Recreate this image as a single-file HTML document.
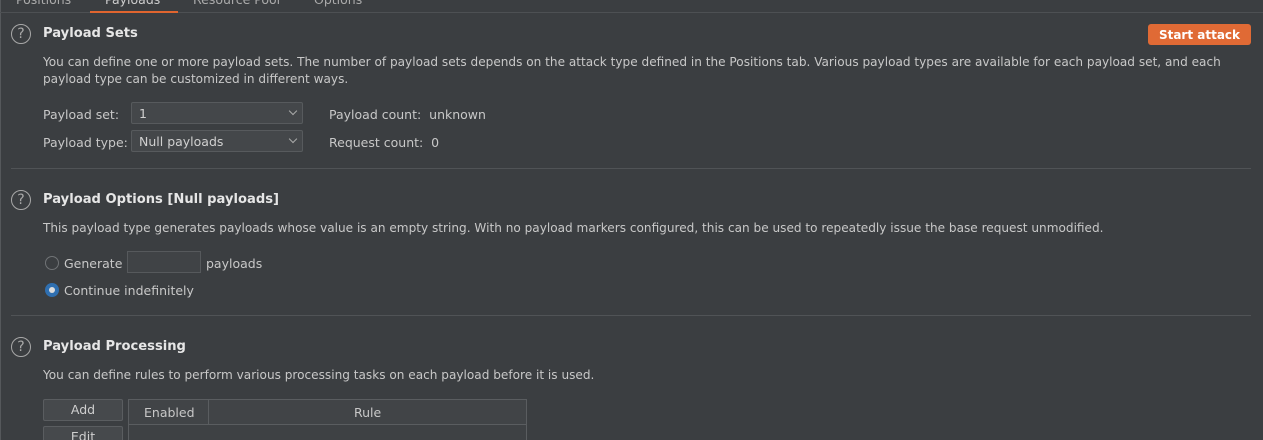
<!DOCTYPE html>
<html><head><style>
html,body{margin:0;width:1263px;height:440px;overflow:hidden}
body{background:#3b3e41;font-family:"DejaVu Sans","Liberation Sans",sans-serif;color:#c8c8c8;font-size:12.5px;position:relative}
.a{position:absolute;white-space:nowrap}
.h{font-weight:bold;font-size:13.1px;color:#e6e6e6}
.q{position:absolute;width:20px;height:20px;border:1.3px solid #a8a8a8;border-radius:50%;box-sizing:border-box;color:#a8a8a8;font-size:14px;text-align:center;line-height:18px}
.sep{position:absolute;left:11px;width:1240px;height:1px;background:#505356}
.dd{position:absolute;left:131px;width:172px;height:22px;border:1px solid #575a5d;background:#44474a;box-sizing:border-box;border-radius:2px;padding-left:7px;line-height:21px;color:#d0d0d0}
.dd:after{content:"";position:absolute;right:6px;top:5px;width:5px;height:5px;border-right:1.2px solid #aaa;border-bottom:1.2px solid #aaa;transform:rotate(45deg)}
.btn{position:absolute;left:43px;width:80px;height:22px;background:#46494c;border:1px solid #5a5d60;box-sizing:border-box;border-radius:2px;text-align:center;line-height:20px;color:#cfcfcf}
.d{font-size:12.1px}
</style></head><body>
<div class="a" style="left:0;top:0;width:1px;height:440px;background:#55585b"></div>
<div class="a" style="left:0;top:12px;width:1263px;height:1px;background:#4d5053"></div>
<div class="a" style="left:16px;top:-8px;color:#aaa">Positions</div>
<div class="a" style="left:105px;top:-8px;color:#ccc">Payloads</div>
<div class="a" style="left:193px;top:-8px;color:#aaa">Resource Pool</div>
<div class="a" style="left:314px;top:-8px;color:#aaa">Options</div>
<div class="a" style="left:90px;top:11px;width:88px;height:2px;background:#e0652f"></div>

<div class="q" style="left:11px;top:24px">?</div>
<div class="a h" style="left:43px;top:26px">Payload Sets</div>
<div class="a" style="left:1148px;top:24px;width:103px;height:21px;background:#e06a35;border-radius:3px;color:#fff;font-weight:bold;text-align:center;line-height:22px;font-size:12px">Start attack</div>
<div class="a d" style="left:43px;top:55px">You can define one or more payload sets. The number of payload sets depends on the attack type defined in the Positions tab. Various payload types are available for each payload set, and each</div>
<div class="a d" style="left:43px;top:72px">payload type can be customized in different ways.</div>
<div class="a" style="left:43px;top:107px">Payload set:</div>
<div class="dd" style="top:102px">1</div>
<div class="a" style="left:329px;top:107px">Payload count:&nbsp; unknown</div>
<div class="a" style="left:43px;top:135px">Payload type:</div>
<div class="dd" style="top:130px">Null payloads</div>
<div class="a" style="left:329px;top:135px">Request count:&nbsp; 0</div>
<div class="sep" style="top:168px"></div>

<div class="q" style="left:11px;top:190px">?</div>
<div class="a h" style="left:43px;top:192px">Payload Options [Null payloads]</div>
<div class="a d" style="left:43px;top:221px">This payload type generates payloads whose value is an empty string. With no payload markers configured, this can be used to repeatedly issue the base request unmodified.</div>
<div class="a" style="left:45px;top:256px;width:14px;height:14px;border:1px solid #707376;border-radius:50%;box-sizing:border-box"></div>
<div class="a" style="left:64px;top:256px">Generate</div>
<div class="a" style="left:127px;top:251px;width:74px;height:22px;border:1px solid #56595c;background:#404346;box-sizing:border-box"></div>
<div class="a" style="left:206px;top:256px">payloads</div>
<div class="a" style="left:45px;top:283px;width:14px;height:14px;border-radius:50%;background:#2f6fb0;box-sizing:border-box"><div style="position:absolute;left:4px;top:4px;width:6px;height:6px;border-radius:50%;background:#ddd"></div></div>
<div class="a" style="left:64px;top:283px">Continue indefinitely</div>
<div class="sep" style="top:315px"></div>

<div class="q" style="left:11px;top:337px">?</div>
<div class="a h" style="left:43px;top:339px">Payload Processing</div>
<div class="a d" style="left:43px;top:368px">You can define rules to perform various processing tasks on each payload before it is used.</div>
<div class="btn" style="top:399px">Add</div>
<div class="btn" style="top:426px">Edit</div>
<div class="a" style="left:128px;top:399px;width:399px;height:50px;border:1px solid #5a5d60;background:#3e4144;box-sizing:border-box"></div>
<div class="a" style="left:129px;top:400px;width:397px;height:24px;border-bottom:1px solid #5a5d60;background:#414447"></div>
<div class="a" style="left:208px;top:400px;width:1px;height:24px;background:#5a5d60"></div>
<div class="a" style="left:144px;top:405px">Enabled</div>
<div class="a" style="left:354px;top:405px">Rule</div>
</body></html>
